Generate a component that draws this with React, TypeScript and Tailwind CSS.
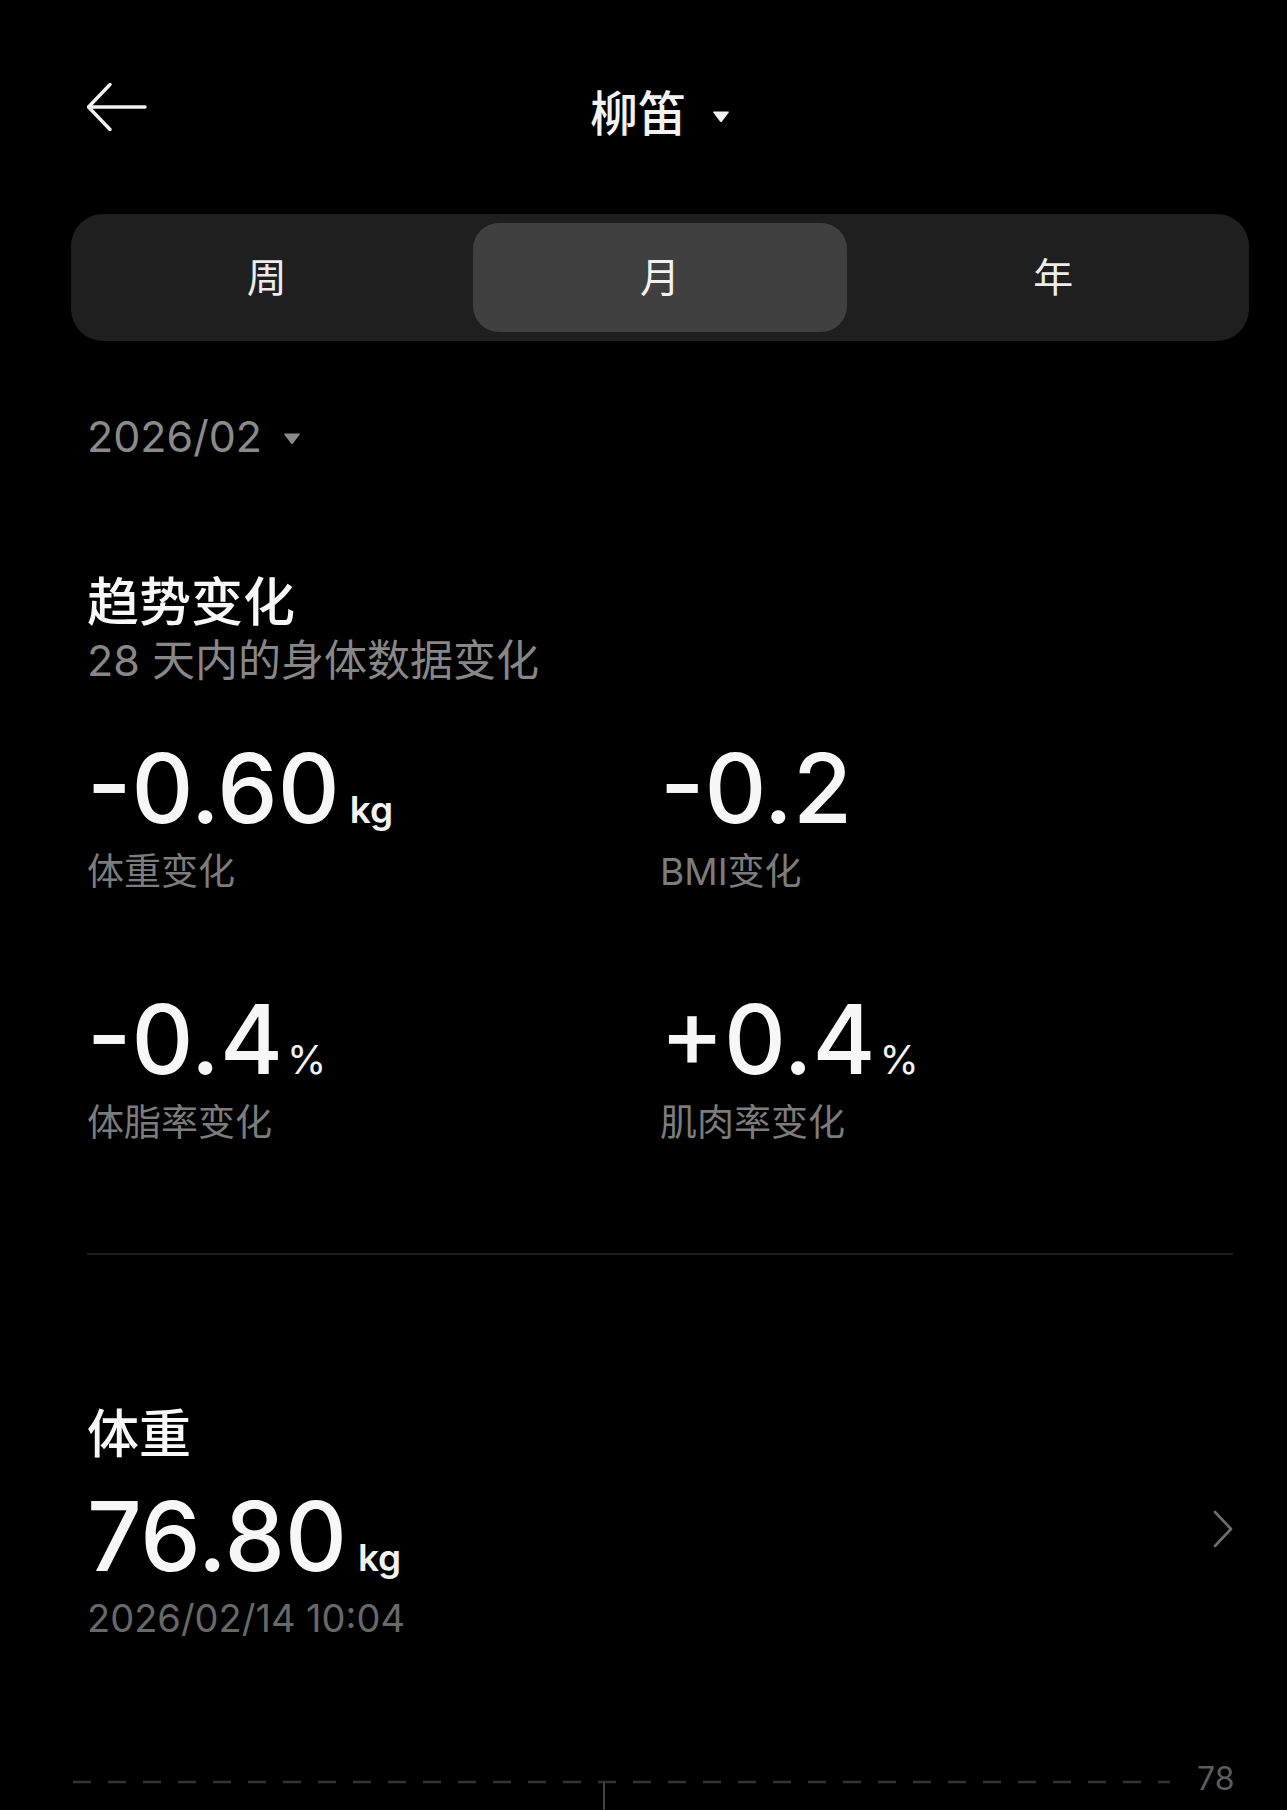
import React from "react";

const FONT = "font-['Inter','Noto_Sans_CJK_SC',sans-serif]";

function Metric({ value, unit, unitClass, label }: { value: string; unit?: string; unitClass?: string; label: string }) {
  return (
    <div className="flex flex-col">
      <div className="flex items-baseline leading-none">
        <span className="text-[96px] font-medium text-[#f7f7f7] leading-none">{value}</span>
        {unit && <span className={`leading-none text-[#f2f2f2] ${unitClass ?? ""}`}>{unit}</span>}
      </div>
      <div className="mt-[17px] text-[37px] leading-none text-[#7c7c7c]">{label}</div>
    </div>
  );
}

function DownTri({ color }: { color: string }) {
  return (
    <svg width="18" height="13" viewBox="0 0 18 13">
      <path d="M2 1.5 H16 Q17.5 1.5 16.6 2.8 L10 11.4 Q9 12.6 8 11.4 L1.4 2.8 Q0.5 1.5 2 1.5 Z" fill={color} />
    </svg>
  );
}

export default function App() {
  return (
    <div className={`w-[1287px] h-[1810px] overflow-hidden bg-black pl-[87px] pr-[54px] ${FONT}`}>
      {/* header */}
      <div className="mt-[83px] h-[48px] grid grid-cols-[1fr_auto_1fr] items-start">
        <div>
          <svg width="60" height="48" viewBox="0 0 60 48" fill="none">
            <path d="M58 24 H2 M23 1.5 L1.5 24 L23 46.5" stroke="#f2f2f2" strokeWidth="3.4" strokeLinecap="round" strokeLinejoin="round" />
          </svg>
        </div>
        <div className="mt-[7px] flex items-center">
          <span className="text-[48px] leading-none font-medium text-[#f2f2f2]">柳笛</span>
          <span className="ml-[26px] mt-[4px]"><DownTri color="#f2f2f2" /></span>
        </div>
        <div />
      </div>

      {/* segmented control */}
      <div className="mt-[83px] -mx-[16px] rounded-[32px] bg-[#1f1f1f] p-[9px] grid grid-cols-3 gap-[20px]">
        <div className="h-[109px] flex items-center justify-center text-[40px] text-[#ececec]">周</div>
        <div className="h-[109px] flex items-center justify-center rounded-[26px] bg-[#404040] text-[40px] text-[#f2f2f2]">月</div>
        <div className="h-[109px] flex items-center justify-center text-[40px] text-[#ececec]">年</div>
      </div>

      {/* date selector */}
      <div className="mt-[74px] flex items-center">
        <span className="text-[43px] leading-none text-[#8a8a8a]">2026/02</span>
        <span className="ml-[21px] mt-[4px]"><DownTri color="#8a8a8a" /></span>
      </div>

      {/* trend */}
      <div className="mt-[119px] text-[52px] leading-none font-medium text-[#f7f7f7]">趋势变化</div>
      <div className="mt-[10px] text-[43px] leading-none text-[#878787]">28 天内的身体数据变化</div>

      <div className="mt-[58px] grid grid-cols-2">
        <Metric value="-0.60" unit="kg" unitClass="ml-[10px] text-[37px] font-semibold" label="体重变化" />
        <Metric value="-0.2" label="BMI变化" />
      </div>
      <div className="mt-[101px] grid grid-cols-2">
        <Metric value="-0.4" unit="%" unitClass="ml-[4px] text-[40px]" label="体脂率变化" />
        <Metric value="+0.4" unit="%" unitClass="ml-[4px] text-[40px]" label="肌肉率变化" />
      </div>

      <div className="mt-[112px] h-[2px] bg-[#1e1e1e]" />

      {/* weight */}
      <div className="mt-[154px] flex items-center justify-between">
        <div className="flex flex-col">
          <div className="text-[52px] leading-none font-medium text-[#f7f7f7]">体重</div>
          <div className="mt-[27px] flex items-baseline leading-none">
            <span className="text-[96px] font-medium text-[#f7f7f7] leading-none">76.80</span>
            <span className="ml-[11px] text-[37px] leading-none font-semibold text-[#f2f2f2]">kg</span>
          </div>
          <div className="mt-[15px] text-[38px] leading-none text-[#686868]">2026/02/14 10:04</div>
        </div>
        <svg width="20" height="38" viewBox="0 0 20 38" fill="none" className="mt-[12px]">
          <path d="M2 2 L18 19 L2 36" stroke="#6e6e6e" strokeWidth="2.6" strokeLinecap="round" strokeLinejoin="round" />
        </svg>
      </div>

      {/* chart */}
      <div className="mt-[107px] -ml-[14px] h-[70px]">
        <svg width="1160" height="70" viewBox="0 0 1160 70">
          <line x1="0" y1="38" x2="1097" y2="38" stroke="#333333" strokeWidth="2.5" strokeDasharray="18 17" />
          <line x1="531" y1="38" x2="531" y2="70" stroke="#444444" strokeWidth="2" />
          <text x="1124" y="46" fontSize="32" fill="#5c5c5c" fontFamily="Inter, sans-serif">78</text>
        </svg>
      </div>
    </div>
  );
}
